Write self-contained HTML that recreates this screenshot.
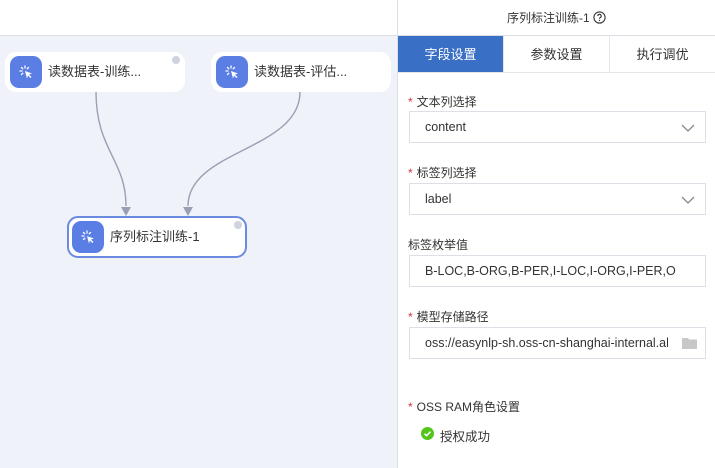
<!DOCTYPE html>
<html><head><meta charset="utf-8"><style>
*{box-sizing:border-box;margin:0;padding:0}
body{width:715px;height:468px;overflow:hidden;font-family:"Liberation Sans","Noto Sans CJK SC",sans-serif;background:#fff;position:relative;color:#333}
.left{position:absolute;left:0;top:0;width:397px;height:468px;background:#eff2f9}
.lhead{position:absolute;left:0;top:0;width:397px;height:36px;background:#fff;border-bottom:1px solid #dcdfe6}
.divider{position:absolute;left:397px;top:0;width:1px;height:468px;background:#dcdfe6}
.node{position:absolute;height:40px;background:#fff;border-radius:11px;font-size:13px;color:#333;line-height:40px;padding-left:43px}
.node .ic{position:absolute;left:5px;top:4px;width:32px;height:32px;border-radius:9px;background:#5b7ee5}
.node .dot{position:absolute;right:5px;top:4px;width:8px;height:8px;border-radius:50%;background:#cfd3df}
.right{position:absolute;left:398px;top:0;width:317px;height:468px}
.title{height:36px;line-height:36px;text-align:center;font-size:12px;color:#333;border-bottom:1px solid #dcdfe6}
.tabs{display:flex;height:37px;border-bottom:1px solid #e4e6eb}
.tab{flex:1;text-align:center;line-height:37px;font-size:13px;color:#333;border-right:1px solid #e4e6eb}
.tab.on{background:#3a6fc6;color:#fff}
.lbl{position:absolute;left:10px;font-size:12px;color:#333}
.lbl b{color:#d9363e;font-weight:normal;margin-right:4px}
.inp{position:absolute;left:11px;width:297px;height:32px;border:1px solid #dcdfe6;font-size:12.5px;line-height:30px;padding-left:15px;color:#333}
.chev{position:absolute;right:10px;top:9px}
</style></head><body>
<div class="left">
<div class="lhead"></div>
<svg style="position:absolute;left:0;top:0" width="397" height="468">
<path d="M96 92 C96 150,126 160,126 206" stroke="#9aa0b3" stroke-width="1.4" fill="none"/>
<path d="M300 92 C300 150,188 150,188 206" stroke="#9aa0b3" stroke-width="1.4" fill="none"/>
<polygon points="121,207 131,207 126,216" fill="#9aa0b3"/>
<polygon points="183,207 193,207 188,216" fill="#9aa0b3"/>
</svg>
<div class="node" style="left:5px;top:52px;width:180px"><div class="ic"><svg width="32" height="32" viewBox="0 0 32 32"><g stroke="#fff" stroke-width="1.3" stroke-linecap="round"><path d="M15 10v2M10 15h2M11.5 11.5l1.3 1.3M18.5 11.5l-1.3 1.3M11.5 18.5l1.3-1.3"/></g><path d="M15 15l7 2.5-3 1 2.5 2.5-1 1-2.5-2.5-1 3z" fill="#fff"/></svg></div>读数据表-训练...<div class="dot"></div></div>
<div class="node" style="left:211px;top:52px;width:180px"><div class="ic"><svg width="32" height="32" viewBox="0 0 32 32"><g stroke="#fff" stroke-width="1.3" stroke-linecap="round"><path d="M15 10v2M10 15h2M11.5 11.5l1.3 1.3M18.5 11.5l-1.3 1.3M11.5 18.5l1.3-1.3"/></g><path d="M15 15l7 2.5-3 1 2.5 2.5-1 1-2.5-2.5-1 3z" fill="#fff"/></svg></div>读数据表-评估...</div>
<div class="node" style="left:67px;top:216px;width:180px;height:42px;border:2px solid #6b8be0;padding-left:41px;line-height:38px"><div class="ic" style="left:3px;top:3px"><svg width="32" height="32" viewBox="0 0 32 32"><g stroke="#fff" stroke-width="1.3" stroke-linecap="round"><path d="M15 10v2M10 15h2M11.5 11.5l1.3 1.3M18.5 11.5l-1.3 1.3M11.5 18.5l1.3-1.3"/></g><path d="M15 15l7 2.5-3 1 2.5 2.5-1 1-2.5-2.5-1 3z" fill="#fff"/></svg></div>序列标注训练-1<div class="dot" style="right:3px;top:3px"></div></div>
</div>
<div class="divider"></div>
<div class="right">
<div class="title">序列标注训练-1 <svg width="13" height="13" viewBox="0 0 13 13" style="vertical-align:-2px"><circle cx="6.5" cy="6.5" r="5.6" fill="none" stroke="#333" stroke-width="1.1"/><path d="M4.8 5a1.7 1.7 0 1 1 2.3 1.6c-.5.2-.6.5-.6 1.1" fill="none" stroke="#333" stroke-width="1.1"/><circle cx="6.5" cy="9.4" r=".7" fill="#333"/></svg></div>
<div class="tabs"><div class="tab on">字段设置</div><div class="tab">参数设置</div><div class="tab" style="border-right:none">执行调优</div></div>
<div class="lbl" style="top:93px"><b>*</b>文本列选择</div>
<div class="inp" style="top:111px">content<svg class="chev" width="14" height="14" viewBox="0 0 14 14"><path d="M1 4l6 6 6-6" fill="none" stroke="#888" stroke-width="1.3"/></svg></div>
<div class="lbl" style="top:164px"><b>*</b>标签列选择</div>
<div class="inp" style="top:183px">label<svg class="chev" width="14" height="14" viewBox="0 0 14 14"><path d="M1 4l6 6 6-6" fill="none" stroke="#888" stroke-width="1.3"/></svg></div>
<div class="lbl" style="top:236px">标签枚举值</div>
<div class="inp" style="top:255px">B-LOC,B-ORG,B-PER,I-LOC,I-ORG,I-PER,O</div>
<div class="lbl" style="top:308px"><b>*</b>模型存储路径</div>
<div class="inp" style="top:327px"><span style="display:block;width:243px;overflow:hidden;white-space:nowrap">oss://easynlp-sh.oss-cn-shanghai-internal.aliyuncs.com</span><svg style="position:absolute;right:8px;top:9px" width="15" height="12" viewBox="0 0 15 12"><path d="M0 1h6l1 1.5h8V12H0z" fill="#c8c8c8"/></svg></div>
<div class="lbl" style="top:398px"><b>*</b>OSS RAM角色设置</div>
<svg style="position:absolute;left:23px;top:427px" width="13" height="13" viewBox="0 0 13 13"><circle cx="6.5" cy="6.5" r="6.5" fill="#52c41a"/><path d="M3.5 6.7l2 2 4-4" fill="none" stroke="#fff" stroke-width="1.5"/></svg>
<div class="lbl" style="top:426px;left:42px;font-size:12.5px">授权成功</div>
</div>
</body></html>
